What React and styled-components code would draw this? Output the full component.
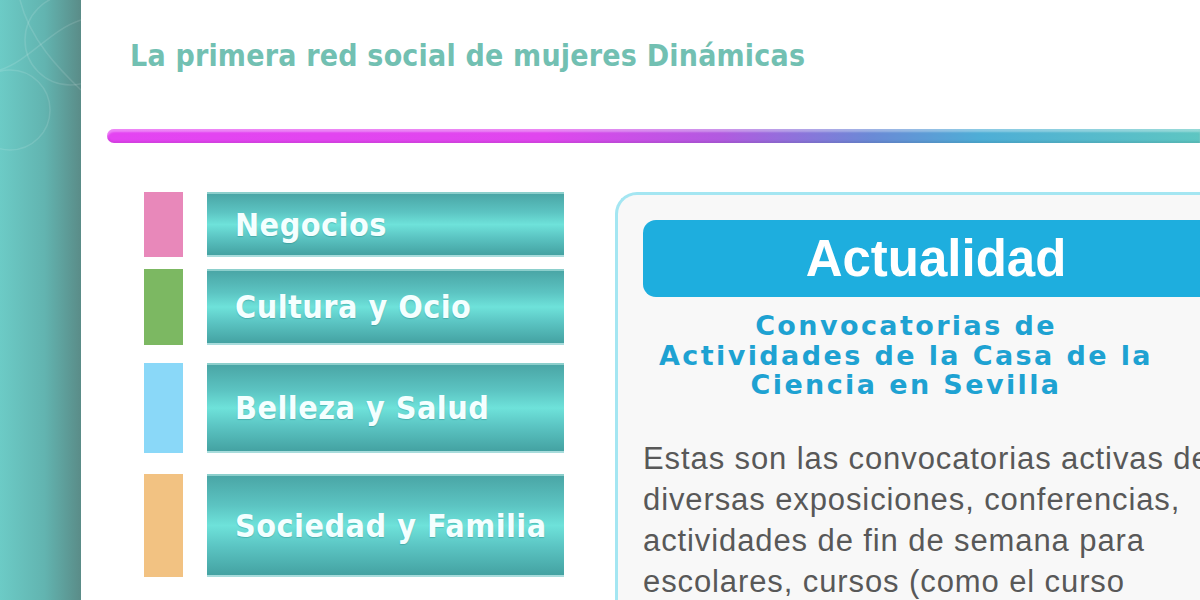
import styled, { createGlobalStyle } from "styled-components";

const GlobalStyle = createGlobalStyle`
  html, body {
    margin: 0;
    padding: 0;
    background: #fff;
    overflow: hidden;
  }
`;

const Page = styled.div`
  display: flex;
  width: 1200px;
  height: 600px;
  overflow: hidden;
`;

const SideStrip = styled.div`
  position: relative;
  flex: 0 0 81px;
  height: 100%;
  background: linear-gradient(to right, #6ccbc6 0%, #62b4b0 55%, #5a8c88 100%);
  overflow: hidden;
`;

const Main = styled.div`
  flex: 1;
  display: flex;
  flex-direction: column;
  min-width: 0;

  & > * {
    flex-shrink: 0;
  }
`;

const Tagline = styled.h1`
  margin: 38px 0 0 49px;
  font-family: "DejaVu Sans Condensed", "DejaVu Sans", sans-serif;
  font-weight: bold;
  font-size: 30px;
  line-height: 36px;
  color: #72c0b2;
  letter-spacing: 0.2px;
  white-space: nowrap;
`;

const Rule = styled.div`
  margin: 55px 0 0 26px;
  height: 14px;
  border-radius: 7px 0 0 7px;
  background: linear-gradient(
    to right,
    #e444f2 0%,
    #e046ee 40%,
    #b25ae0 56%,
    #6a8ad6 70%,
    #4eaed6 80%,
    #5ec6c2 100%
  );
  box-shadow: inset 0 3px 2px rgba(255, 255, 255, 0.35), inset 0 -2px 2px rgba(0, 0, 0, 0.08);
`;

const Content = styled.div`
  display: flex;
  margin-top: 49px;
  padding-left: 63px;
  gap: 51px;
  align-items: flex-start;
`;

const Menu = styled.ul`
  list-style: none;
  margin: 0;
  padding: 0;
  display: flex;
  flex-direction: column;
  width: 420px;
`;

const MenuRow = styled.li`
  display: flex;
  gap: 24px;
  height: ${(p) => p.h}px;
  margin-bottom: ${(p) => p.gap}px;
`;

const Swatch = styled.span`
  flex: 0 0 39px;
  background: ${(p) => p.color};
`;

const MenuButton = styled.a`
  flex: 0 0 357px;
  display: flex;
  align-items: center;
  box-sizing: border-box;
  padding-left: 28px;
  border-top: 2px solid #8ccfcc;
  border-bottom: 2px solid #a8dcdc;
  background: linear-gradient(
    to bottom,
    #4aa6a6 0%,
    #5cc4c2 30%,
    #6ee2da 50%,
    #5cc6c4 70%,
    #44a2a2 100%
  );
  font-family: "DejaVu Sans Condensed", "DejaVu Sans", sans-serif;
  font-weight: bold;
  font-size: 32px;
  letter-spacing: 0.5px;
  color: #f4ffff;
  text-decoration: none;
  white-space: nowrap;
  text-shadow: 0 1px 1px rgba(0, 90, 90, 0.25);
`;

const Card = styled.section`
  flex: 0 0 auto;
  width: 640px;
  height: 430px;
  box-sizing: border-box;
  border: 3px solid #a4e6f2;
  border-right: none;
  border-radius: 22px 0 0 0;
  background: #f8f8f8;
  padding: 25px 0 0 25px;
`;

const CardHeader = styled.h2`
  margin: 0;
  width: 586px;
  height: 77px;
  display: flex;
  align-items: center;
  justify-content: center;
  border-radius: 13px;
  background: #1eaede;
  font-family: "Liberation Sans", Arial, sans-serif;
  font-weight: bold;
  font-size: 51px;
  color: #fff;
`;

const NewsTitle = styled.h3`
  margin: 14px 0 0 0;
  width: 526px;
  text-align: center;
  font-family: "DejaVu Sans", Verdana, sans-serif;
  font-weight: bold;
  font-size: 27px;
  line-height: 29.5px;
  letter-spacing: 2.4px;
  color: #1ea2d2;
`;

const NewsBody = styled.p`
  margin: 38px 0 0 0;
  font-family: "Liberation Sans", Arial, sans-serif;
  font-size: 31px;
  line-height: 41px;
  letter-spacing: 0.9px;
  color: #585858;
  white-space: nowrap;
`;

const menuItems = [
  { label: "Negocios", color: "#e888ba", h: 65, gap: 12 },
  { label: "Cultura y Ocio", color: "#7cb862", h: 76, gap: 18 },
  { label: "Belleza y Salud", color: "#8ad8f8", h: 90, gap: 21 },
  { label: "Sociedad y Familia", color: "#f2c282", h: 103, gap: 0 },
];

const Swirls = () => (
  <svg width="81" height="600" viewBox="0 0 81 600" style={{ position: "absolute", left: 0, top: 0 }}>
    <g fill="none" stroke="#ffffff" strokeOpacity="0.12" strokeWidth="1.5">
      <circle cx="70" cy="40" r="45" />
      <circle cx="10" cy="110" r="40" />
      <path d="M0 70 C30 60 50 30 81 20" />
      <path d="M20 0 C30 40 60 70 81 90" />
    </g>
  </svg>
);

export default function App() {
  return (
    <Page>
      <GlobalStyle />
      <SideStrip>
        <Swirls />
      </SideStrip>
      <Main>
        <Tagline>La primera red social de mujeres Dinámicas</Tagline>
        <Rule />
        <Content>
          <Menu>
            {menuItems.map((m) => (
              <MenuRow key={m.label} h={m.h} gap={m.gap}>
                <Swatch color={m.color} />
                <MenuButton href="#">{m.label}</MenuButton>
              </MenuRow>
            ))}
          </Menu>
          <Card>
            <CardHeader>Actualidad</CardHeader>
            <NewsTitle>
              Convocatorias de
              <br />
              Actividades de la Casa de la
              <br />
              Ciencia en Sevilla
            </NewsTitle>
            <NewsBody>
              Estas son las convocatorias activas de
              <br />
              diversas exposiciones, conferencias,
              <br />
              actividades de fin de semana para
              <br />
              escolares, cursos (como el curso
            </NewsBody>
          </Card>
        </Content>
      </Main>
    </Page>
  );
}
